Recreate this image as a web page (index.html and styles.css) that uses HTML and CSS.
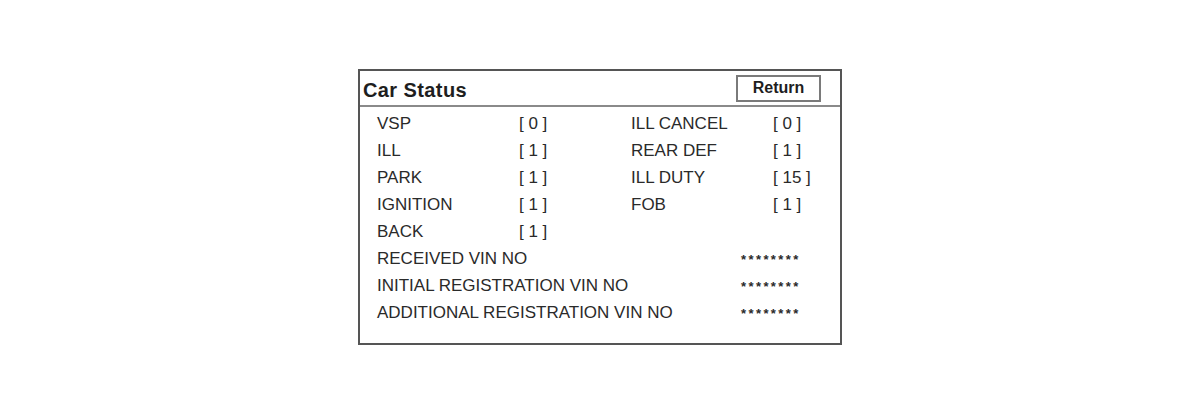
FILE: index.html
```html
<!DOCTYPE html>
<html>
<head>
<meta charset="utf-8">
<link rel="stylesheet" href="styles.css">
</head>
<body>
<div class="panel">
  <div class="header">
    <div class="title">Car Status</div>
    <div class="return">Return</div>
  </div>
  <div class="body">
    <div class="grid">
      <span>VSP</span><span>[ 0 ]</span><span>ILL CANCEL</span><span>[ 0 ]</span>
      <span>ILL</span><span>[ 1 ]</span><span>REAR DEF</span><span>[ 1 ]</span>
      <span>PARK</span><span>[ 1 ]</span><span>ILL DUTY</span><span>[ 15 ]</span>
      <span>IGNITION</span><span>[ 1 ]</span><span>FOB</span><span>[ 1 ]</span>
      <span>BACK</span><span>[ 1 ]</span><span></span><span></span>
    </div>
    <div class="vins">
      <span>RECEIVED VIN NO</span><span class="stars">********</span>
      <span>INITIAL REGISTRATION VIN NO</span><span class="stars">********</span>
      <span>ADDITIONAL REGISTRATION VIN NO</span><span class="stars">********</span>
    </div>
  </div>
</div>
</body>
</html>
```
FILE: styles.css
```css
html, body {
  margin: 0;
  padding: 0;
  background: #fff;
}
body {
  font-family: "Liberation Sans", Arial, sans-serif;
  color: #2a2a2a;
  padding-top: 69px;
}
.panel {
  width: 480px;
  height: 272px;
  margin: 0 auto;
  border: 2px solid #555;
}
.header {
  height: 34px;
  border-bottom: 2px solid #8a8a8a;
  display: flex;
  align-items: center;
  justify-content: space-between;
  padding: 0 19px 0 3px;
}
.title {
  font-weight: bold;
  font-size: 20px;
  letter-spacing: 0.4px;
  color: #1e1e1e;
  margin-top: 4px;
}
.return {
  width: 81px;
  height: 23px;
  border: 2px solid #7a7a7a;
  font-weight: bold;
  font-size: 16px;
  color: #1e1e1e;
  display: flex;
  align-items: center;
  justify-content: center;
}
.body {
  padding: 3px 0 0 17px;
  font-size: 17px;
}
.grid {
  display: grid;
  grid-template-columns: 142px 112px 142px auto;
  grid-auto-rows: 27px;
  align-items: center;
}
.vins {
  display: grid;
  grid-template-columns: 364px auto;
  grid-auto-rows: 27px;
  align-items: center;
}
.stars {
  font-size: 13px;
  font-weight: bold;
  letter-spacing: 2.4px;
  position: relative;
  top: 1px;
}
```
